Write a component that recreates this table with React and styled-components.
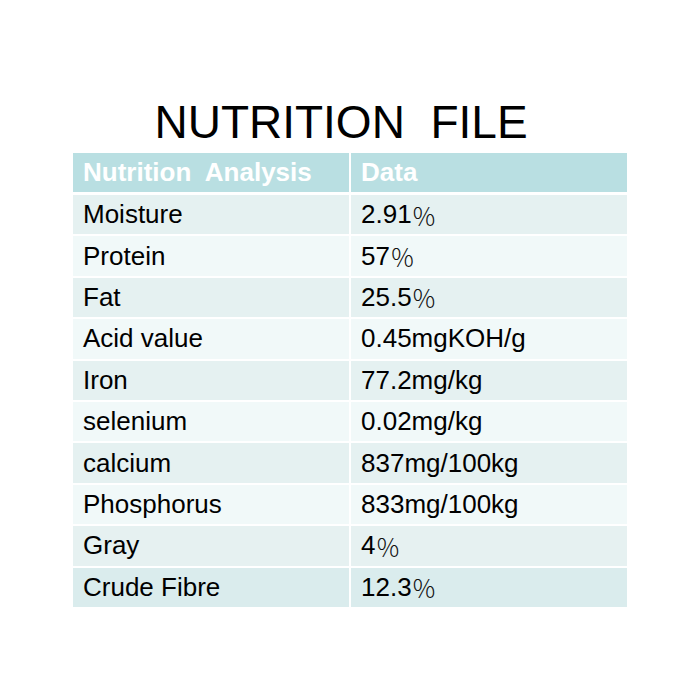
import styled, { createGlobalStyle } from "styled-components";

const GlobalStyle = createGlobalStyle`
  html, body {
    margin: 0;
    padding: 0;
    background: #ffffff;
  }
  body {
    font-family: "Liberation Sans", Arial, sans-serif;
  }
`;

// [name, value, ends with a full-width percent sign, row tint]
const rows = [
  ["Moisture", "2.91", true, "#e5f1f1"],
  ["Protein", "57", true, "#f1f9f9"],
  ["Fat", "25.5", true, "#e5f1f1"],
  ["Acid value", "0.45mgKOH/g", false, "#f1f9f9"],
  ["Iron", "77.2mg/kg", false, "#e5f1f1"],
  ["selenium", "0.02mg/kg", false, "#f1f9f9"],
  ["calcium", "837mg/100kg", false, "#e5f1f1"],
  ["Phosphorus", "833mg/100kg", false, "#f1f9f9"],
  ["Gray", "4", true, "#e6f1f1"],
  ["Crude Fibre", "12.3", true, "#daeced"],
];

const Page = styled.div`
  width: 700px;
  height: 700px;
  display: flex;
  flex-direction: column;
  align-items: center;
  padding-top: 94px;
  box-sizing: border-box;
`;

const Title = styled.h1`
  margin: 0;
  padding-right: 18px;
  font-family: "Liberation Sans", Arial, sans-serif;
  font-weight: 400;
  font-size: 46px;
  line-height: 56px;
  color: #000;
  white-space: pre;
`;

const Table = styled.div`
  width: 554px;
  margin-top: 3px;
  display: flex;
  flex-direction: column;
  gap: 2px;
`;

const Row = styled.div`
  display: grid;
  grid-template-columns: 276px 1fr;
  column-gap: 2px;
  height: ${(p) => (p.$head ? "39px" : "39.4px")};
  margin-bottom: ${(p) => (p.$head ? "1px" : "0")};
`;

const Cell = styled.div`
  display: flex;
  align-items: center;
  padding-left: 10px;
  font-size: 26px;
  color: ${(p) => (p.$head ? "#ffffff" : "#000000")};
  font-weight: ${(p) => (p.$head ? 700 : 400)};
  background: ${(p) => p.$bg};
  white-space: pre;
`;

const Percent = styled.span`
  font-family: "Noto Sans CJK SC", sans-serif;
  font-weight: 300;
  font-size: 25px;
  color: #111;
`;

export default function App() {
  return (
    <>
      <GlobalStyle />
      <Page>
        <Title>{"NUTRITION  FILE"}</Title>
        <Table>
          <Row $head>
            <Cell $head $bg="#b9dfe2">{"Nutrition  Analysis"}</Cell>
            <Cell $head $bg="#b9dfe2">Data</Cell>
          </Row>
          {rows.map(([name, value, pct, bg]) => (
            <Row key={name}>
              <Cell $bg={bg}>{name}</Cell>
              <Cell $bg={bg}>
                {value}
                {pct && <Percent>％</Percent>}
              </Cell>
            </Row>
          ))}
        </Table>
      </Page>
    </>
  );
}
